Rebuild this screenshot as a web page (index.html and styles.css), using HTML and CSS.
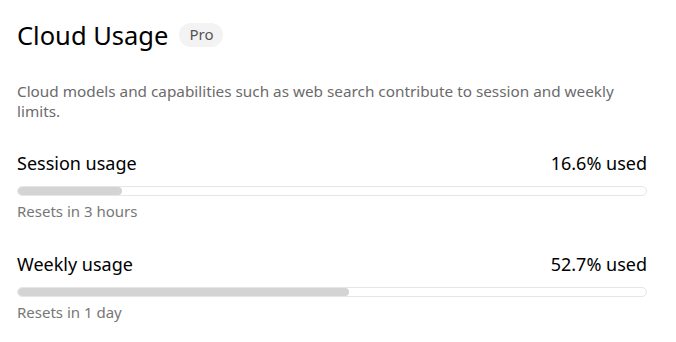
FILE: index.html
```html
<!DOCTYPE html>
<html>
<head>
<meta charset="utf-8">
<link rel="stylesheet" href="styles.css">
</head>
<body>
<div class="page">
  <div class="header">
    <h1 class="title">Cloud Usage</h1>
    <span class="badge">Pro</span>
  </div>
  <p class="desc">Cloud models and capabilities such as web search contribute to session and weekly limits.</p>
  <div class="usage">
    <div class="row"><span class="label">Session usage</span><span class="value">16.6% used</span></div>
    <div class="bar"><div class="fill" style="width:16.6%"></div></div>
    <div class="reset">Resets in 3 hours</div>
  </div>
  <div class="usage">
    <div class="row"><span class="label">Weekly usage</span><span class="value">52.7% used</span></div>
    <div class="bar"><div class="fill" style="width:52.7%"></div></div>
    <div class="reset">Resets in 1 day</div>
  </div>
</div>
</body>
</html>
```
FILE: styles.css
```css
html, body { margin: 0; padding: 0; background: #fff; }
body { font-family: "Noto Sans", "Open Sans", sans-serif; color: #000; }
.page { padding: 17px 29px 0 17px; }
.header { display: flex; align-items: center; gap: 11px; height: 36px; }
.title { margin: 0; font-size: 25.5px; font-weight: 400; color: #000; }
.badge { background: #f3f3f3; color: #555; font-size: 15px; border-radius: 12px; padding: 1px 10px 2px; line-height: 21px; }
.desc { margin: 28px 0 0; font-size: 15.3px; line-height: 20px; color: #6b6b6b; max-width: 620px; }
.usage { margin-top: 30px; }
.usage + .usage { margin-top: 31px; }
.row { display: flex; justify-content: space-between; font-size: 18px; line-height: 24px; }
.bar { margin-top: 11px; height: 8px; border: 1px solid #e6e6e6; border-radius: 5px; overflow: hidden; }
.fill { height: 100%; background: #d4d4d4; border-radius: 5px; }
.reset { margin-top: 5px; font-size: 15px; line-height: 20px; color: #777; }
```
